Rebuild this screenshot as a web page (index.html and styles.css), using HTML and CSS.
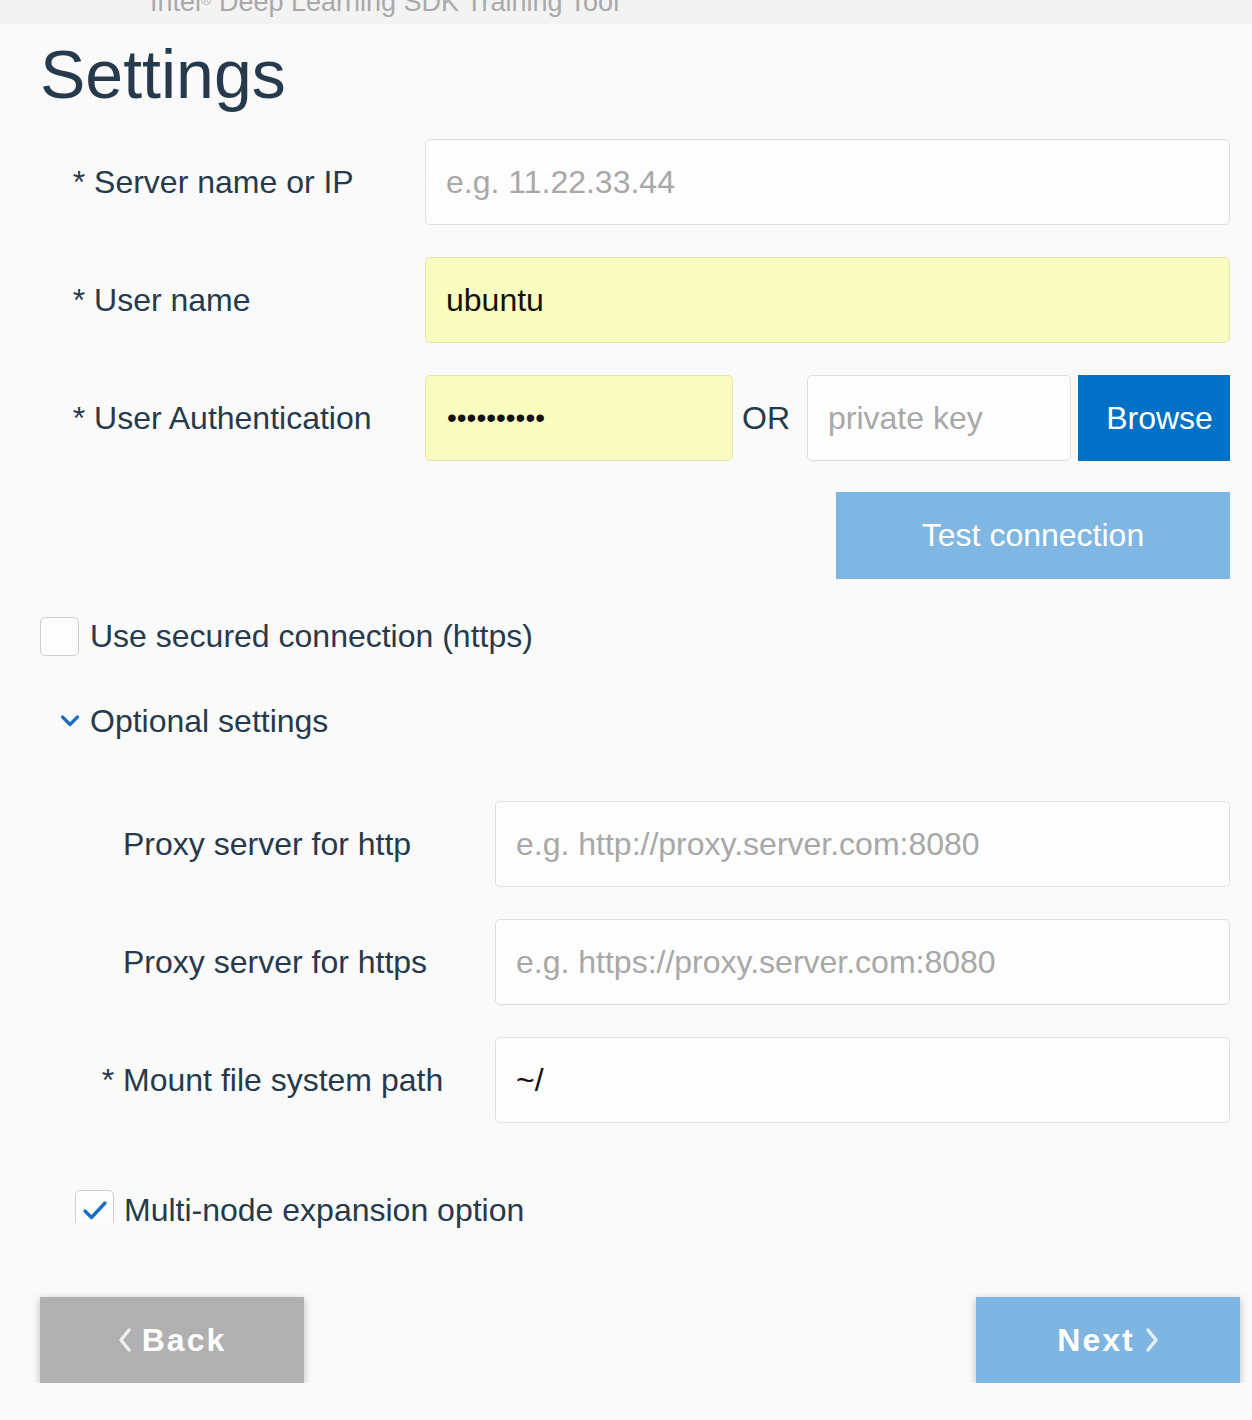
FILE: index.html
```html
<!DOCTYPE html>
<html lang="en">
<head>
<meta charset="utf-8">
<title>Settings</title>
<link rel="stylesheet" href="styles.css">
</head>
<body>
<header class="topbar"><div class="topbar-title">Intel<sup class="reg">®</sup> Deep Learning SDK Training Tool</div></header>
<main class="page">
  <h1 class="title">Settings</h1>
  <form class="form">
    <div class="row">
      <label class="label"><span class="req">* </span>Server name or IP</label>
      <input class="field" type="text" placeholder="e.g. 11.22.33.44">
    </div>
    <div class="row">
      <label class="label"><span class="req">* </span>User name</label>
      <input class="field field-filled" type="text" value="ubuntu">
    </div>
    <div class="row row-auth">
      <label class="label"><span class="req">* </span>User Authentication</label>
      <input class="field field-filled field-pw" type="password" value="abcdefghij">
      <span class="or">OR</span>
      <input class="field field-key" type="text" placeholder="private key">
      <button type="button" class="btn btn-browse">Browse</button>
    </div>
    <div class="actions">
      <button type="button" class="btn btn-test">Test connection</button>
    </div>
    <div class="check-row">
      <span class="checkbox"></span>
      <span class="check-label">Use secured connection (https)</span>
    </div>
    <div class="toggle-row">
      <svg class="chevron-down" width="20" height="14" viewBox="0 0 20 14"><path d="M2.5 3 L10 10.5 L17.5 3" fill="none" stroke="#1a6fc4" stroke-width="3.2" stroke-linecap="round" stroke-linejoin="round"/></svg>
      <span class="toggle-label">Optional settings</span>
    </div>
    <div class="optional">
      <div class="row row-opt">
        <label class="label label-opt">Proxy server for http</label>
        <input class="field" type="text" placeholder="e.g. http://proxy.server.com:8080">
      </div>
      <div class="row row-opt">
        <label class="label label-opt">Proxy server for https</label>
        <input class="field" type="text" placeholder="e.g. https://proxy.server.com:8080">
      </div>
      <div class="row row-opt">
        <label class="label label-opt"><span class="req">* </span>Mount file system path</label>
        <input class="field" type="text" value="~/">
      </div>
      <div class="multi-row">
        <span class="checkbox-clip"><span class="checkbox checkbox-on"><svg width="34" height="34" viewBox="0 0 34 34"><path d="M7 18 L13.5 24.5 L27 10" fill="none" stroke="#1a6fc4" stroke-width="3.4" stroke-linecap="round" stroke-linejoin="round"/></svg></span></span>
        <span class="check-label check-label-multi">Multi-node expansion option</span>
      </div>
    </div>
  </form>
  <nav class="footer">
    <button type="button" class="btn btn-nav btn-back"><svg width="14" height="24" viewBox="0 0 14 24"><path d="M11 2 L3 12 L11 22" fill="none" stroke="#fff" stroke-opacity="0.8" stroke-width="3.4" stroke-linecap="round" stroke-linejoin="round"/></svg><span>Back</span></button>
    <button type="button" class="btn btn-nav btn-next"><span>Next</span><svg width="14" height="24" viewBox="0 0 14 24"><path d="M3 2 L11 12 L3 22" fill="none" stroke="#fff" stroke-opacity="0.8" stroke-width="3.4" stroke-linecap="round" stroke-linejoin="round"/></svg></button>
  </nav>
</main>
</body>
</html>
```

FILE: styles.css
```css
* { box-sizing: border-box; }

html, body {
  margin: 0;
  padding: 0;
}

body {
  background: #fafafa;
  font-family: "Liberation Sans", Arial, sans-serif;
  color: #263a4c;
  font-size: 32px;
}

.topbar {
  height: 24px;
  background: #f3f3f3;
  overflow: hidden;
}

.topbar-title {
  margin-top: -11px;
  padding-left: 150px;
  font-size: 27px;
  line-height: 27px;
  color: #a9a9a9;
  white-space: nowrap;
}

.reg {
  font-size: 14px;
  vertical-align: 6px;
  line-height: 0;
}

.page {
  padding: 16px 22px 0 40px;
}

.title {
  margin: 0;
  font-size: 68px;
  line-height: 68px;
  font-weight: 400;
  color: #263a4c;
}

.form {
  margin: 31px 0 0;
}

.row {
  display: flex;
  align-items: center;
  height: 86px;
  margin-bottom: 32px;
}

.label {
  flex: none;
  width: 385px;
  padding-left: 54px;
  font-size: 32px;
  line-height: 38px;
  color: #263a4c;
  white-space: nowrap;
}

.req {
  margin-left: -21.3px;
}

.field {
  flex: 1;
  min-width: 0;
  height: 86px;
  border: 1.5px solid #e0e0e0;
  border-radius: 5px;
  background: #fdfdfd;
  padding: 0 0 0 20px;
  font-family: "Liberation Sans", Arial, sans-serif;
  font-size: 32px;
  color: #111;
  outline: none;
}

.field::placeholder {
  color: #a8a8a8;
  opacity: 1;
}

.field-filled {
  background: #f9fdbf;
  border-color: #e4e7a8;
}

.field-pw {
  flex: none;
  width: 308px;
  font-size: 28px;
  letter-spacing: 0;
  padding-left: 21px;
}

.or {
  flex: none;
  margin: 0 17px 0 9px;
  font-size: 32px;
  color: #263a4c;
}

.field-key {
  flex: none;
  width: 264px;
}

.btn {
  border: none;
  margin: 0;
  padding: 0;
  font-family: "Liberation Sans", Arial, sans-serif;
  font-size: 32px;
  color: #fff;
  cursor: pointer;
}

.btn-browse {
  flex: none;
  width: 152px;
  height: 86px;
  margin-left: 7px;
  padding-left: 11px;
  background: #0071c5;
}

.actions {
  display: flex;
  justify-content: flex-end;
  margin-top: -1px;
}

.btn-test {
  width: 394px;
  height: 87px;
  background: #80b6e2;
}

.check-row {
  display: flex;
  align-items: center;
  height: 38px;
  margin-top: 38px;
}

.checkbox {
  flex: none;
  display: flex;
  align-items: center;
  justify-content: center;
  width: 39px;
  height: 39px;
  border: 1.5px solid #cfcfcf;
  border-radius: 5px;
  background: #fdfdfd;
}

.check-label {
  margin-left: 11px;
  font-size: 32px;
  line-height: 38px;
  color: #263a4c;
  white-space: nowrap;
}

.toggle-row {
  display: flex;
  align-items: center;
  height: 38px;
  margin-top: 47px;
  padding-left: 20px;
}

.chevron-down {
  flex: none;
  margin-top: -1px;
}

.toggle-label {
  margin-left: 10px;
  font-size: 32px;
  line-height: 38px;
  color: #263a4c;
}

.optional {
  margin-top: 61px;
}

.row-opt {
  margin-left: 83px;
}

.label-opt {
  width: 372px;
  padding-left: 0;
}

.multi-row {
  display: flex;
  align-items: flex-start;
  height: 38px;
  margin-top: 67px;
  padding-left: 35px;
}

.checkbox-clip {
  flex: none;
  display: block;
  height: 33px;
  overflow: hidden;
}

.checkbox-on svg {
  display: block;
}

.check-label-multi {
  margin-left: 10px;
  line-height: 40px;
}

.footer {
  display: flex;
  justify-content: space-between;
  margin: 69px -10px 0 0;
}

.btn-nav {
  display: flex;
  align-items: center;
  justify-content: center;
  width: 264px;
  height: 86px;
  font-weight: 700;
  letter-spacing: 2px;
  box-shadow: 0 2px 8px rgba(0, 0, 0, 0.25);
}

.btn-nav svg {
  flex: none;
}

.btn-back {
  background: #b0b0b0;
}

.btn-back svg {
  margin-right: 10px;
}

.btn-next {
  background: #7fb5e1;
}

.btn-next svg {
  margin-left: 10px;
}
```
